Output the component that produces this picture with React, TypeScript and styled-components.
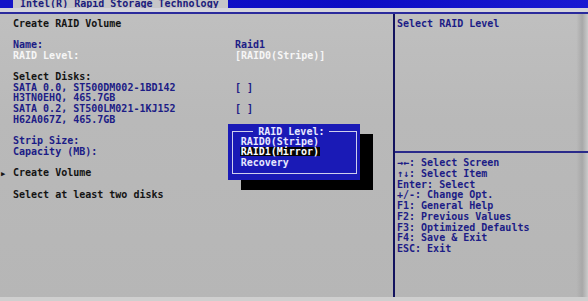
import * as React from 'react';
import styled, { createGlobalStyle } from 'styled-components';

const LINE = 10.7;

const GlobalStyle = createGlobalStyle`
  html, body {
    margin: 0;
    padding: 0;
    background: #b8b8b8;
  }
`;

const TONES = {
  blue: '#1c1c86',
  black: '#141414',
  white: '#f6f6f6',
};

type Tone = keyof typeof TONES;

const Screen = styled.div`
  position: relative;
  width: 588px;
  height: 301px;
  overflow: hidden;
  display: flex;
  flex-direction: column;
  font-family: 'DejaVu Sans Mono', 'Liberation Mono', monospace;
  font-size: 10px;
  font-weight: bold;
  line-height: ${LINE}px;
  background: linear-gradient(180deg, #c0c0c0 0%, #b9b9b9 40%, #b6b6b6 100%);
`;

const TitleBar = styled.div`
  height: 8px;
  flex: none;
  display: flex;
  padding-left: 13px;
  background: linear-gradient(90deg, #1414c8 0%, #0c0cc4 60%, #1a1ad2 100%);
`;

const Tab = styled.div`
  width: 208px;
  height: 8px;
  padding-left: 7px;
  background: #c6c6c8;
  color: #1c1c7c;
  line-height: 8px;
  white-space: nowrap;
`;

const LightStrip = styled.div`
  height: 4px;
  flex: none;
  background: #d4d4dc;
`;

const BlueRule = styled.div`
  height: 2px;
  flex: none;
  background: #2a2a9c;
`;

const Body = styled.div`
  flex: 1;
  display: flex;
  min-height: 0;
`;

const LeftPanel = styled.div`
  width: 380px;
  padding: 4.6px 0 0 13px;
`;

const Row = styled.div`
  display: grid;
  grid-template-columns: 222px 1fr;
  height: ${LINE}px;
  white-space: nowrap;
`;

const Cell = styled.span<{ $tone: Tone }>`
  color: ${(p) => TONES[p.$tone]};
`;

const Marker = styled.span`
  display: inline-block;
  width: 12px;
  margin-left: -12px;
  font-size: 7px;
  color: #141414;
`;

const Divider = styled.div`
  width: 2px;
  flex: none;
  background: #12125e;
`;

const RightPanel = styled.div`
  flex: 1;
  display: flex;
  flex-direction: column;
  background: linear-gradient(90deg, transparent 0%, transparent 94%, #a8a8a8 97%, #cacaca 100%);
`;

const HintBox = styled.div`
  height: 137px;
  padding: 4.6px 0 0 2px;
  color: ${TONES.blue};
  box-sizing: border-box;
`;

const HelpRule = styled.div`
  height: 1.5px;
  background: #2a2a8a;
`;

const HelpList = styled.div`
  padding: 5.8px 0 0 2px;
  color: ${TONES.blue};
  white-space: pre;
`;

const BottomStrip = styled.div`
  height: 4px;
  flex: none;
  background: #cfcfcf;
`;

const Popup = styled.div`
  position: absolute;
  left: 228px;
  top: 124px;
  width: 132px;
  height: 56px;
  box-sizing: border-box;
  padding: 7px 3px 6px 3.7px;
  background: #1a1ab6;
  box-shadow: 13px 10px 0 #000;
  color: #e8e8ff;
`;

const PopupFrame = styled.div`
  position: relative;
  height: 100%;
  border: 1px solid #d0d0ec;
  box-sizing: border-box;
  padding: 5px 0 0 8px;
  line-height: 10.3px;
`;

const PopupTitle = styled.div`
  position: absolute;
  top: -6px;
  left: 0;
  right: 6px;
  display: flex;
  justify-content: center;
`;

const TitleText = styled.span`
  background: #1a1ab6;
  padding: 0 5px;
  line-height: 11px;
`;

const PopupItem = styled.div<{ $selected?: boolean }>`
  height: 10.3px;
  white-space: nowrap;
`;

const ItemLabel = styled.span<{ $selected?: boolean }>`
  display: inline-block;
  margin-left: -1px;
  padding: 0 1px;
  height: 9px;
  line-height: 9px;
  background: ${(p) => (p.$selected ? '#050505' : 'transparent')};
  color: ${(p) => (p.$selected ? '#ffffff' : '#e8e8ff')};
`;

type Line = [string, Tone, string?] | null;

const LEFT_LINES: Line[] = [
  ['Create RAID Volume', 'black'],
  null,
  ['Name:', 'blue', 'Raid1'],
  ['RAID Level:', 'white', '[RAID0(Stripe)]'],
  null,
  ['Select Disks:', 'black'],
  ['SATA 0.0, ST500DM002-1BD142', 'blue', '[ ]'],
  ['H3TN0EHQ, 465.7GB', 'blue'],
  ['SATA 0.2, ST500LM021-1KJ152', 'blue', '[ ]'],
  ['H62A067Z, 465.7GB', 'blue'],
  null,
  ['Strip Size:', 'blue'],
  ['Capacity (MB):', 'blue'],
  null,
  ['Create Volume', 'black'],
  null,
  ['Select at least two disks', 'black'],
];

const HELP = [
  '→←: Select Screen',
  '↑↓: Select Item',
  'Enter: Select',
  '+/-: Change Opt.',
  'F1: General Help',
  'F2: Previous Values',
  'F3: Optimized Defaults',
  'F4: Save & Exit',
  'ESC: Exit',
];

const LEVELS = ['RAID0(Stripe)', 'RAID1(Mirror)', 'Recovery'];

export default function App() {
  return (
    <>
      <GlobalStyle />
      <Screen>
        <TitleBar>
          <Tab>Intel(R) Rapid Storage Technology</Tab>
        </TitleBar>
        <LightStrip />
        <BlueRule />
        <Body>
          <LeftPanel>
            {LEFT_LINES.map((line, i) =>
              line ? (
                <Row key={i}>
                  <Cell $tone={line[1]}>
                    {line[0] === 'Create Volume' && <Marker>▶</Marker>}
                    {line[0]}
                  </Cell>
                  {line[2] && <Cell $tone={line[1]}>{line[2]}</Cell>}
                </Row>
              ) : (
                <Row key={i} />
              ),
            )}
          </LeftPanel>
          <Divider />
          <RightPanel>
            <HintBox>Select RAID Level</HintBox>
            <HelpRule />
            <HelpList>
              {HELP.map((h) => (
                <div key={h}>{h}</div>
              ))}
            </HelpList>
          </RightPanel>
        </Body>
        <BottomStrip />
        <Popup>
          <PopupFrame>
            <PopupTitle>
              <TitleText>RAID Level:</TitleText>
            </PopupTitle>
            {LEVELS.map((l) => (
              <PopupItem key={l}>
                <ItemLabel $selected={l === 'RAID1(Mirror)'}>{l}</ItemLabel>
              </PopupItem>
            ))}
          </PopupFrame>
        </Popup>
      </Screen>
    </>
  );
}
